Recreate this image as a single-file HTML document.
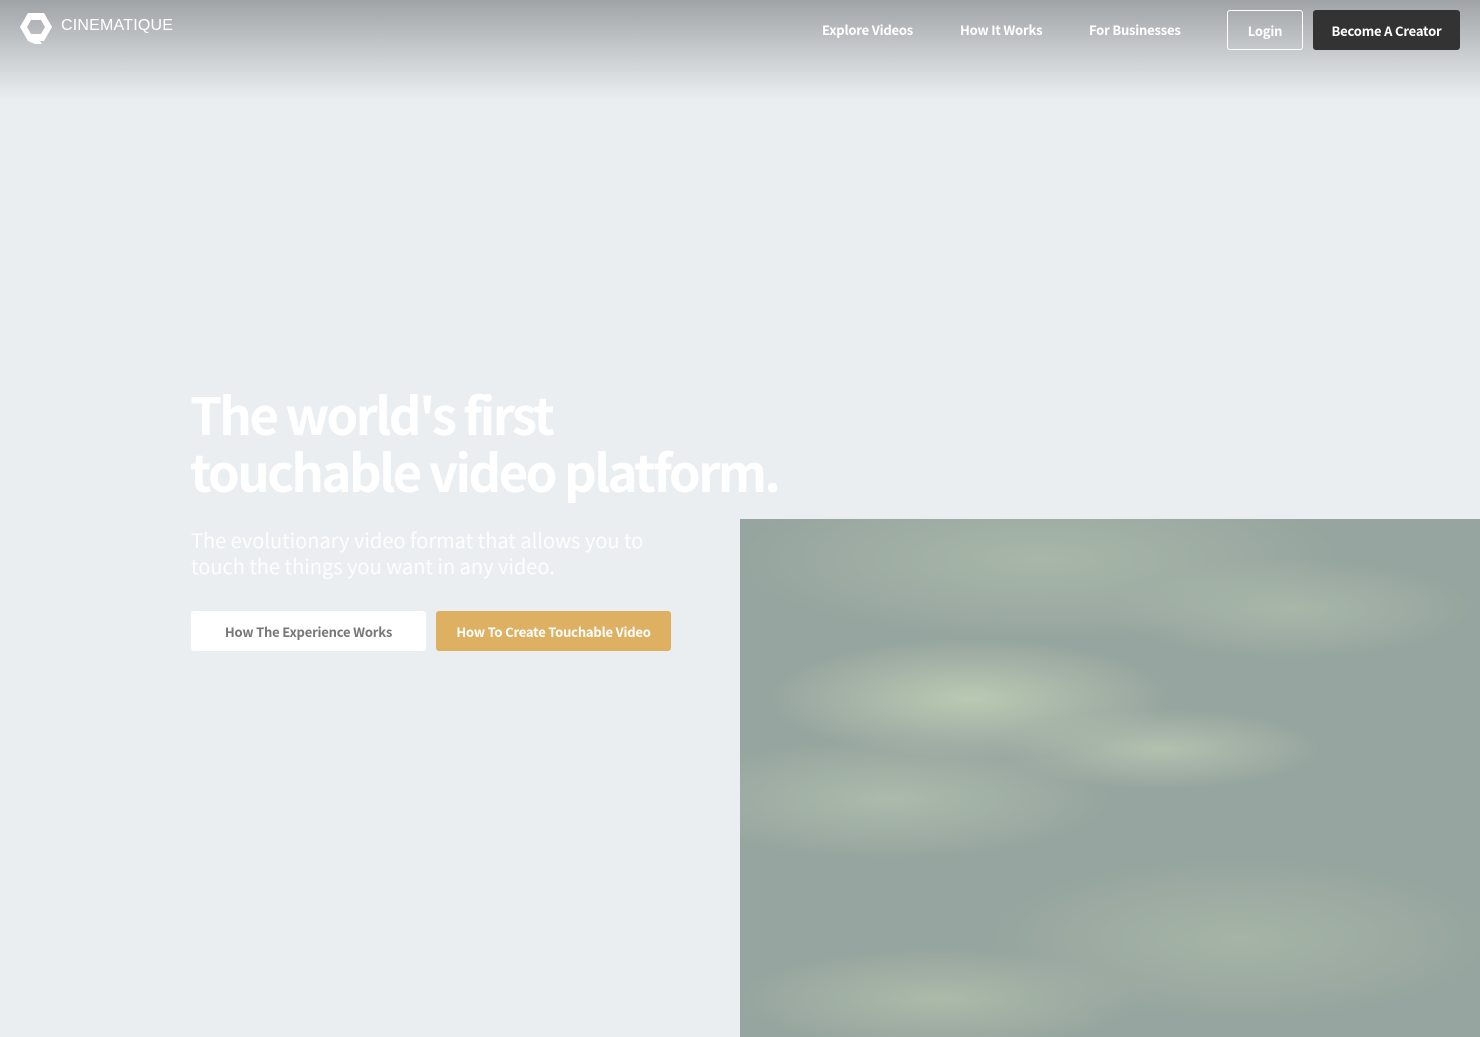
<!DOCTYPE html>
<html><head><meta charset="utf-8"><style>
*{margin:0;padding:0;box-sizing:border-box}
html,body{width:1480px;height:1037px;overflow:hidden}
body{background:#ebeef0;font-family:"Noto Sans CJK JP","Liberation Sans",sans-serif;position:relative;color:#fff}
.hdr{position:absolute;left:0;top:0;width:1480px;height:100px;background:linear-gradient(#a0a3a6 0%,#c3c6c9 45%,#ebeef0 100%)}
.logo{position:absolute;left:20px;top:12px}
.brand{position:absolute;left:61px;top:17px;font-family:"Liberation Sans",sans-serif;font-size:16px;letter-spacing:0.2px;color:#fff}
.nav{position:absolute;top:20px;font-size:13px;font-weight:700;color:#fff;letter-spacing:-0.2px}
.btn{position:absolute;font-size:13px;font-weight:700;display:flex;align-items:center;justify-content:center;border-radius:3px;letter-spacing:-0.2px}
h1{position:absolute;left:190px;top:385px;font-size:51px;line-height:57px;font-weight:700;letter-spacing:-2.6px;color:#fff}
p.sub{position:absolute;left:191px;top:527px;font-size:20px;line-height:26px;font-weight:400;color:#fff;width:490px;opacity:.9}
.img{position:absolute;left:740px;top:519px;width:740px;height:518px;background:
radial-gradient(ellipse 200px 60px at 230px 180px,rgba(190,205,180,.9),transparent),
radial-gradient(ellipse 160px 40px at 420px 230px,rgba(185,200,178,.8),transparent),
radial-gradient(ellipse 220px 60px at 150px 280px,rgba(180,195,175,.7),transparent),
radial-gradient(ellipse 300px 80px at 300px 40px,rgba(175,190,172,.7),transparent),
radial-gradient(ellipse 180px 50px at 550px 90px,rgba(180,195,175,.6),transparent),
radial-gradient(ellipse 250px 80px at 500px 420px,rgba(175,190,170,.6),transparent),
radial-gradient(ellipse 200px 50px at 200px 480px,rgba(180,195,172,.7),transparent),
#97a5a0}
</style></head><body>
<div class="hdr"></div>
<svg class="logo" width="32" height="32" viewBox="0 0 32 32"><path d="M8 1H24L32 15L24 29H20L22 32H15L8 29L0 15Z M11 8L7 15L11 22H21L25 15L21 8Z" fill="#fff" fill-rule="evenodd"/></svg>
<div class="brand">CINEMATIQUE</div>
<div class="nav" style="left:822px">Explore Videos</div>
<div class="nav" style="left:960px">How It Works</div>
<div class="nav" style="left:1089px">For Businesses</div>
<div class="btn" style="left:1227px;top:10px;width:76px;height:40px;border:1px solid #fff;color:#fff">Login</div>
<div class="btn" style="left:1313px;top:10px;width:147px;height:40px;background:#333;color:#fff">Become A Creator</div>
<h1>The world's first<br>touchable video platform.</h1>
<p class="sub">The evolutionary video format that allows you to touch the things you want in any video.</p>
<div class="btn" style="left:191px;top:611px;width:235px;height:40px;background:#fff;color:#777">How The Experience Works</div>
<div class="btn" style="left:436px;top:611px;width:235px;height:40px;background:#ddb062;color:#fff">How To Create Touchable Video</div>
<div class="img"></div>
</body></html>
